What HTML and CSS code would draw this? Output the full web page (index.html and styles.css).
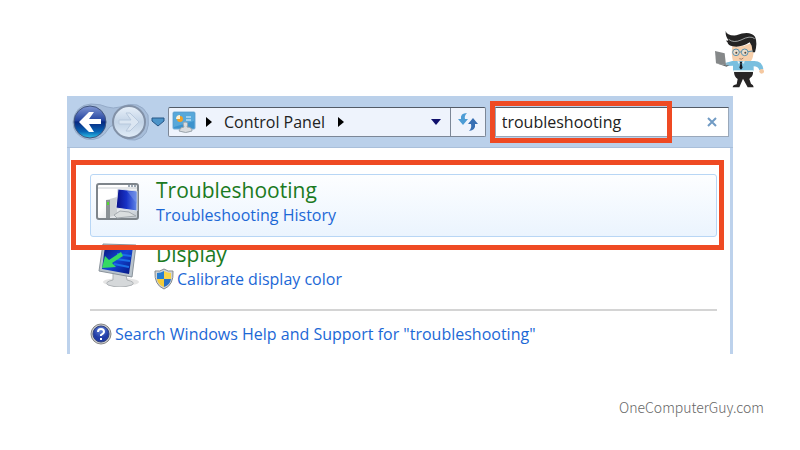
FILE: index.html
```html
<!DOCTYPE html>
<html lang="en">
<head>
<meta charset="utf-8">
<title>Control Panel - troubleshooting</title>
<link rel="stylesheet" href="styles.css">
</head>
<body>
<header class="brand">
  <svg class="brand-logo" viewBox="42 30 150 174" role="img" aria-label="One Computer Guy">
    <path d="M102 155h57q1 12-8 18l-3 4 5 14q8 3 8 11h-18l-14-26-11 26H98q0-7 12-9l3-16q-11-8-11-22z" fill="#272525"/>
    <path d="M97 123h64q26-1 29 25l-12 3q-3-12-17-12v13H99v-15l-20 1-3-9z" fill="#79bfdf"/>
    <path d="M100 151h60v5h-60z" fill="#e9f4f5"/>
    <circle cx="185" cy="154" r="7" fill="#f5c8a0"/>
    <path d="M76 130l10-3 4 8-13 4z" fill="#8dbbd0"/>
    <path d="M97 78q30 5 57-8l7 24q-1 21-8 29H99q-6-20-2-45z" fill="#f6cfab"/>
    <path d="M77 33q4 15 32 13 40-16 56 4 8 17 0 47h-7l-3-20-6-10q-27 17-51 12-13-2-16-13-3 0-3-5 5 3 6-1-9-11-8-27z" fill="#242323"/>
    <path d="M86 58q15 12 37 2 28-15 41-4" fill="none" stroke="#d9dfe0" stroke-width="2"/>
    <g fill="#e9ddcc" stroke="#5b91ad" stroke-width="3"><circle cx="108" cy="97" r="10"/><circle cx="134" cy="97" r="10"/><path d="M118 96h6M144 95l14-2" fill="none"/></g>
    <circle cx="109" cy="98" r="3" fill="#594636"/><circle cx="136" cy="98" r="3" fill="#594636"/>
    <path d="M118 116q7 4 12-2" fill="none" stroke="#865744" stroke-width="2"/>
    <path d="M112 122l11 5 11-5-2 9-9-4-8 4z" fill="#dff0f5"/>
    <path d="M119 125h8l-2 6 3 12-5 6-5-6 3-12z" fill="#151a22"/>
    <path d="M45 93l29 7 4 36-30-6z" fill="#858889"/><path d="M48 130l30 6 10-1-8 5z" fill="#656a6c"/>
  </svg>
</header>

<main class="window">
  <div class="toolbar">
    <div class="nav">
      <svg class="nav-plate" viewBox="0 0 78 38" aria-hidden="true">
        <defs>
          <linearGradient id="back" x2="0" y2="1"><stop stop-color="#8197d2"/><stop offset=".45" stop-color="#2444a0"/><stop offset=".5" stop-color="#082780"/><stop offset=".8" stop-color="#0865b5"/><stop offset="1" stop-color="#31c4e7"/></linearGradient>
          <linearGradient id="forward" x2="0" y2="1"><stop stop-color="#e9f1fa"/><stop offset=".5" stop-color="#c2d3e6"/><stop offset="1" stop-color="#e2edf8"/></linearGradient>
        </defs>
        <path d="M19 1q10 0 16 3 6 2 13 0 20-8 28 8 3 22-13 25-14 1-19-12-3-5-7 0-8 14-23 11Q1 32 1 19 3 2 19 1z" fill="#a7bdd9" stroke="#95abc8"/>
        <circle cx="18" cy="19" r="16" fill="url(#back)" stroke="#42557d" stroke-width="1"/>
        <circle cx="57" cy="19" r="16" fill="url(#forward)" stroke="#8291a7" stroke-width="2"/>
        <path d="M17 9L7 19l10 10h5l-5-8h12v-5H17l5-7z" fill="#fff"/>
        <path d="M58 10l9 9-9 9h-4l5-7H47v-4h12l-5-7z" fill="#dbe6f2" stroke="#b8c9dd"/>
      </svg>
      <button class="nav-back" type="button" aria-label="Back"></button>
      <button class="nav-forward" type="button" aria-label="Forward"></button>
    </div>
    <button class="recent" type="button" aria-label="Recent pages">
      <svg width="14" height="10" viewBox="0 0 14 10"><path d="M1 1h12v3L7 9 1 4z" fill="#4c94c9" stroke="#275686"/></svg>
    </button>
    <div class="address">
      <svg class="panel-icon" width="24" height="24" viewBox="0 0 24 24" aria-hidden="true">
        <rect x="1" y="2" width="22" height="17" rx="1" fill="#3c93cd" stroke="#74aed8"/>
        <path d="M2 3h20v8L2 17z" fill="#57a8da"/>
        <circle cx="8" cy="9" r="3" fill="#f1a126"/><path d="M8 9V5a4 4 0 0 0-4 4z" fill="#fff0cc"/>
        <path d="M14 7h5M14 10h5" stroke="#e5f5ff" stroke-width="1"/>
        <path d="M7 21q1-4 5-4-2-5 1-5 4 0 2 5 5 0 5 4-6 3-13 0z" fill="#d9dcdf" stroke="#9ba5ad"/>
      </svg>
      <svg class="crumb-arrow" width="6" height="10" viewBox="0 0 6 10" aria-hidden="true"><path d="M0 0l6 5-6 5z"/></svg>
      <a class="crumb" href="#">Control Panel</a>
      <svg class="crumb-arrow" width="6" height="10" viewBox="0 0 6 10" aria-hidden="true"><path d="M0 0l6 5-6 5z"/></svg>
      <button class="drop" type="button" aria-label="Previous locations"><svg width="10" height="6" viewBox="0 0 10 6"><path d="M0 0h10L5 6z" fill="#10106c"/></svg></button>
      <button class="refresh" type="button" aria-label="Refresh">
        <svg width="20" height="20" viewBox="0 0 20 20"><path d="M9 1Q2 1 3 7H0l5 6 5-6H7Q6 4 9 1z" fill="#4c9cd5"/><path d="M11 19q7-1 6-7h3l-5-6-5 6h3q1 4-2 7z" fill="#376fb3"/></svg>
      </button>
    </div>
    <div class="search">
      <input class="search-input" type="text" value="troubleshooting" aria-label="Search Control Panel">
      <button class="clear" type="button" aria-label="Clear search"><svg width="10" height="10" viewBox="0 0 10 10"><path d="M1 1l8 8M9 1L1 9" stroke="#719bc4" stroke-width="2"/></svg></button>
      <span class="mark mark-search"></span>
    </div>
  </div>

  <div class="results">
    <section class="result result-selected">
      <svg class="result-icon" width="44" height="38" viewBox="0 0 44 38" aria-hidden="true">
        <defs><linearGradient id="screen"><stop stop-color="#0b1189"/><stop offset=".5" stop-color="#1732c6"/><stop offset="1" stop-color="#6388e8"/></linearGradient>
        <linearGradient id="pane" x2="1" y2="1"><stop offset=".4" stop-color="#fff"/><stop offset="1" stop-color="#bfc7ce"/></linearGradient></defs>
        <rect x="1" y="1" width="41" height="35" rx="2" fill="url(#pane)" stroke="#7e858b" stroke-width="2"/>
        <path d="M2 5h39" stroke="#c9ced2"/><path d="M32 3h2M35 3h2M38 3h2" stroke="#40576f" stroke-width="1"/>
        <path d="M10 17l11-3v18l-11 3z" fill="#cdd1d3"/><path d="M10 17h4v18h-4z" fill="#8b9296"/><path d="M11 19h2v3h-2z" fill="#54d832"/>
        <path d="M22 6l19 2v20l-21-3z" fill="url(#screen)" stroke="#dce2e8"/><path d="M31 8l10 1v12z" fill="#7997e8" opacity=".5"/>
        <path d="M24 28l9 1 7 4-19 2-3-3z" fill="#dadedf" stroke="#a4aaaf"/>
      </svg>
      <div class="result-text">
        <a class="result-title" href="#">Troubleshooting</a>
        <a class="task" href="#">Troubleshooting History</a>
      </div>
      <span class="mark mark-result"></span>
    </section>
    <section class="result">
      <svg class="result-icon" width="44" height="46" viewBox="0 0 44 46" aria-hidden="true">
        <defs><linearGradient id="display" x2="1" y2="1"><stop stop-color="#071173"/><stop offset=".5" stop-color="#1346d5"/><stop offset="1" stop-color="#05127b"/></linearGradient></defs>
        <ellipse cx="25" cy="41" rx="18" ry="4" fill="#e5e5e5"/>
        <path d="M17 32l13 2 1 5q9 2 5 5-12 4-24 0-4-3 5-5z" fill="#d5d8da" stroke="#aeb2b5"/>
        <path d="M7 3l33 1-4 32-33-6z" fill="#b9c3cc" stroke="#8a939b"/>
        <path d="M9 5l28 1-4 27-27-5z" fill="url(#display)"/>
        <path d="M21 13l14 2M20 18l14 2M18 23l15 3" stroke="#1a6fe6" stroke-width="2"/>
        <path d="M9 15L6 27l14-1-4-4 11-7-2-4-12 8z" fill="#35d963"/>
      </svg>
      <div class="result-text">
        <a class="result-title" href="#">Display</a>
        <a class="task" href="#">
          <svg class="shield" width="20" height="22" viewBox="0 0 20 22" aria-hidden="true"><path d="M10 1q4 3 9 2 1 14-9 18Q0 17 1 3q5 1 9-2z" fill="#d2d5d7" stroke="#858b8f"/><path d="M10 3v8H3V5q4 0 7-2z" fill="#287dd0"/><path d="M10 3q3 2 7 2v6h-7z" fill="#f9d447"/><path d="M3 11h7v8q-6-2-7-8z" fill="#f4cc38"/><path d="M10 11h7q-1 6-7 8z" fill="#286fc4"/></svg>
          Calibrate display color</a>
      </div>
    </section>
    <a class="help" href="#">
      <svg width="22" height="22" viewBox="0 0 22 22" aria-hidden="true"><defs><radialGradient id="ball" cy=".25"><stop stop-color="#6888da"/><stop offset="1" stop-color="#203ba6"/></radialGradient></defs><circle cx="11" cy="11" r="10" fill="#c8c8c8" stroke="#878787"/><circle cx="11" cy="11" r="8" fill="url(#ball)" stroke="#31437f"/><path d="M8 9q0-3 3-3t3 3q0 1-3 3v1" fill="none" stroke="#fff" stroke-width="2"/><path d="M10 15h2v2h-2z" fill="#fff"/></svg>
      Search Windows Help and Support for "troubleshooting"</a>
  </div>
</main>
<footer class="site">OneComputerGuy.com</footer>
</body>
</html>
```
FILE: styles.css
```css
* { box-sizing: border-box; }
body {
  margin: 0;
  background: #fff;
  font-family: "Open Sans", "Noto Sans", sans-serif;
  font-size: 16px;
}
svg { display: block; flex: none; }
a { color: inherit; text-decoration: none; }
button { padding: 0; border: 0; background: none; }

.brand { display: flex; justify-content: flex-end; padding: 30px 36px 8px; }
.brand-logo { width: 50px; height: 58px; }

.window { margin: 0 67px; background: #fff; border: solid #bdd2ec; border-width: 0 3px; }
.toolbar {
  display: flex;
  align-items: center;
  height: 52px;
  margin: 0 -3px;
  padding: 0 4px 0 5px;
  background: #bad0ea;
  border-bottom: 1px solid #a9bfda;
}
.nav { position: relative; display: flex; width: 78px; height: 38px; }
.nav-plate { position: absolute; inset: 0; }
.nav-back, .nav-forward { position: relative; flex: 1; border-radius: 50%; }
.recent { width: 16px; display: grid; place-items: center; }

.address {
  display: flex;
  align-items: center;
  flex: 318;
  height: 30px;
  margin-left: 2px;
  background: #eef3fc;
  border: 1px solid #7c8797;
  border-top-color: #535b66;
  border-radius: 2px;
}
.panel-icon { margin: 0 10px 0 3px; }
.crumb { margin: 0 13px 0 12px; color: #222; white-space: nowrap; }
.drop { display: grid; place-items: center; width: 28px; height: 100%; margin-left: auto; }
.refresh { display: grid; place-items: center; width: 35px; height: 100%; border-left: 1px solid #7c8797; }

.search {
  position: relative;
  display: flex;
  flex: 234;
  min-width: 0;
  height: 30px;
  margin-left: 9px;
  background: #fff;
  border: 1px solid #9aa8ba;
  border-top-color: #535b66;
}
.search-input { flex: 1; width: 100%; min-width: 0; padding: 0 6px; border: 0; background: none; color: #222; font: inherit; }
.clear { display: grid; place-items: center; flex: none; width: 32px; }

.mark { position: absolute; border: 5px solid #ef4a23; pointer-events: none; }
.mark-search { inset: -7px 56px -7px -6px; }
.mark-result { inset: -15px -8px -14px -20px; }

.results { padding: 26px 13px 8px 20px; }
.result { position: relative; display: flex; align-items: flex-start; gap: 16px; padding: 2px 5px 0; }
.result-selected {
  z-index: 1;
  height: 63px;
  background: linear-gradient(#fdfeff, #ebf4fe);
  border: 1px solid #b8d6f5;
  border-radius: 3px;
}
.result-selected .result-icon { margin-top: 6px; }
.result-text { display: flex; flex-direction: column; }
.result-title { color: #1b7a22; font-size: 21px; line-height: 26px; }
.task { display: flex; align-items: center; gap: 3px; color: #1c68d6; line-height: 24px; }
.shield { margin-left: -2px; }

.result:not(.result-selected) { padding: 4px 5px 18px 6px; }
.help {
  display: flex;
  align-items: center;
  gap: 3px;
  padding-top: 11px;
  border-top: 2px solid #d4d4d4;
  color: #1c68d6;
  line-height: 24px;
  white-space: nowrap;
}
.site { padding: 41px 36px 0; color: #666; font: 300 14px/24px "Noto Sans CJK SC", sans-serif; text-align: right; }
```
